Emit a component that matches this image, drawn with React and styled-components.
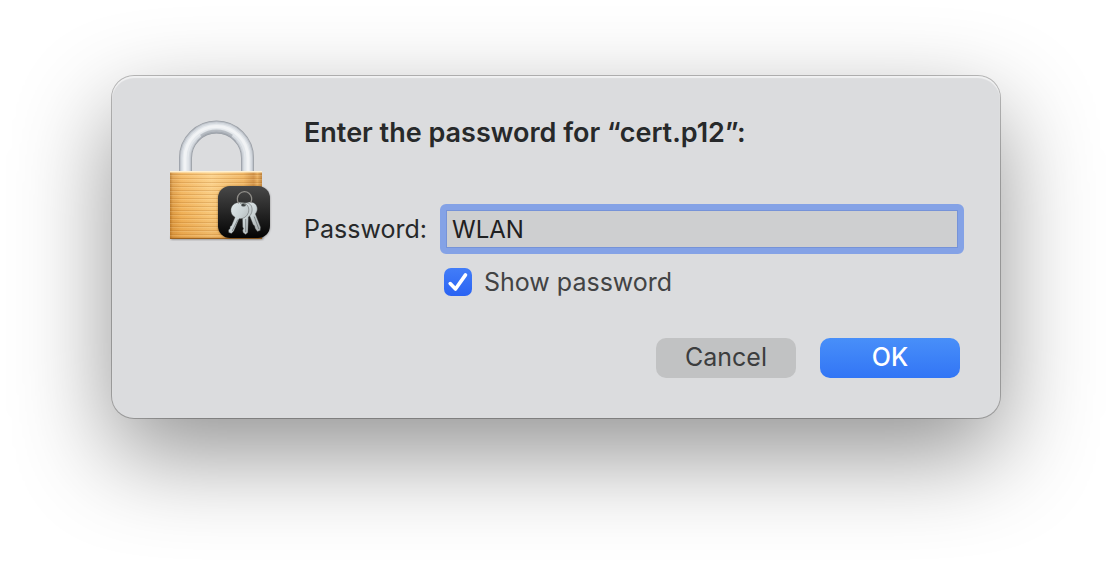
import React, { useState } from "react";
import styled, { createGlobalStyle } from "styled-components";

const App = () => {
  const [password, setPassword] = useState('WLAN')
  const [visible, setVisible] = useState(true)

  return (
    <Page>
      <GlobalStyle />
      <Dialog role="dialog" aria-labelledby="dialog-title">
        <LockIcon />
        <Form onSubmit={(ev) => ev.preventDefault()}>
          <Title id="dialog-title">Enter the password for “cert.p12”:</Title>
          <Fields>
            <Label htmlFor="password">Password:</Label>
            <Field
              id="password"
              type={visible ? 'text' : 'password'}
              value={password}
              onChange={(ev) => setPassword(ev.target.value)}
            />
            <CheckRow htmlFor="show-password">
              <CheckBox>
                <CheckInput
                  id="show-password"
                  type="checkbox"
                  checked={visible}
                  onChange={() => setVisible(!visible)}
                />
                {visible && (
                  <CheckMark viewBox="0 0 28 28" aria-hidden="true">
                    <path d="M6.2 15.6 L11.5 21 L21.5 6.9" />
                  </CheckMark>
                )}
              </CheckBox>
              Show password
            </CheckRow>
          </Fields>
          <Actions>
            <Button type="button">Cancel</Button>
            <Button type="submit" $primary>OK</Button>
          </Actions>
        </Form>
      </Dialog>
    </Page>
  );
};

const LockIcon = () => (
  <Icon viewBox="0 0 128 128" aria-hidden="true">
    <defs>
      <linearGradient id="brass" x1="0" x2="1" y1="0" y2="0">
        <stop offset="0" stopColor="#b97a2c" />
        <stop offset="0.03" stopColor="#e0a04a" />
        <stop offset="0.12" stopColor="#f3b55c" />
        <stop offset="0.45" stopColor="#fccf83" />
        <stop offset="0.8" stopColor="#f0b25a" />
        <stop offset="0.91" stopColor="#d08c3b" />
        <stop offset="0.95" stopColor="#e9aa54" />
        <stop offset="1" stopColor="#bd7d30" />
      </linearGradient>
      <linearGradient id="shade" x1="0" x2="0" y1="0" y2="1">
        <stop offset="0" stopColor="#fff" stopOpacity="0.1" />
        <stop offset="0.6" stopColor="#d98a2b" stopOpacity="0.12" />
        <stop offset="1" stopColor="#c97a20" stopOpacity="0.3" />
      </linearGradient>
      <pattern id="ridges" width="8" height="4" patternUnits="userSpaceOnUse">
        <rect y="2" width="8" height="1" fill="#a8641a" opacity="0.24" />
        <rect y="3" width="8" height="1" fill="#fff0cc" opacity="0.15" />
      </pattern>
      <linearGradient id="badge" x1="0" x2="0" y1="0" y2="1">
        <stop offset="0" stopColor="#484848" />
        <stop offset="0.5" stopColor="#262626" />
        <stop offset="1" stopColor="#030303" />
      </linearGradient>
      <linearGradient id="key" x1="0" x2="1" y1="0" y2="1">
        <stop offset="0" stopColor="#e4ecee" />
        <stop offset="0.5" stopColor="#c9d2d4" />
        <stop offset="1" stopColor="#a3a8a8" />
      </linearGradient>
      <filter id="soft" x="-20%" y="-20%" width="140%" height="140%">
        <feGaussianBlur stdDeviation="1.2" />
      </filter>
    </defs>

    {/* shackle, built up from dark edge to highlight */}
    <g fill="none">
      <path d="M33.5 56 V42 a31 31 0 0 1 62 0 V56" stroke="#9a9fa6" strokeWidth="13" />
      <path d="M33.5 56 V42 a31 31 0 0 1 62 0 V56" stroke="#bcc1c8" strokeWidth="11.4" />
      <path d="M33.5 56 V42 a31 31 0 0 1 62 0 V56" stroke="#d3d8de" strokeWidth="9.4" />
      <path d="M33.5 56 V42 a31 31 0 0 1 62 0 V56" stroke="#e3e7eb" strokeWidth="6.4" />
      <path d="M33 56 V42 a31.5 31.5 0 0 1 63 0 V56" stroke="#f1f3f5" strokeWidth="3" />
      <path d="M45 25.5 a25.8 25.8 0 0 1 39 0" stroke="#959ba3" strokeWidth="1.6" opacity="0.35" />
      <path d="M49 20 a27 27 0 0 1 31 0" stroke="#959ba3" strokeWidth="3" opacity="0.5" />
    </g>

    <rect x="19" y="120" width="92" height="3.5" fill="#000" opacity="0.4" filter="url(#soft)" />
    <rect x="18" y="55" width="92" height="68" rx="1" fill="url(#brass)" />
    <rect x="18" y="55" width="92" height="68" rx="1" fill="url(#shade)" />
    <rect x="18" y="58" width="92" height="63" fill="url(#ridges)" />
    <rect x="18" y="55" width="92" height="1.5" fill="#fff1d2" />
    <rect x="18" y="121.8" width="92" height="1.2" fill="#9d6220" />

    <rect x="66" y="70.5" width="52" height="52" rx="12" fill="#000" opacity="0.35" filter="url(#soft)" />
    <rect x="66" y="70" width="52" height="52" rx="12" fill="url(#badge)" />

    <g stroke="#3a3c3d" strokeWidth="0.4" strokeLinejoin="round">
      <path fill="url(#key)" d="M95 86.5 c3.5-1.4 8-.2 9.6 3.2 c1.3 2.9.8 5.8-1.2 8.2 l5.2 13.4 -.4 3.2 -2.8 1 -2.2-3.1 -.7-2.6 -1.3-1 -3.4-8.6 c-4-.6-6.6-3.2-6.8-7 c-.1-3.2 1.2-5.6 4-6.7z" />
      <path fill="url(#key)" d="M91 87 c3.4-1 7.6.3 8.7 3.8 c1.2 4-.3 8.2-3.3 10.2 l-.5 15.6 -2.3 1.9 -2.6-1.9 -.3-2.4 .8-1.6 -.8-1.6 -.4-11.6 c-3-2.2-4.4-10 .7-12.4z" />
      <path fill="url(#key)" d="M87.6 86.2 c4.9-.4 8.8 2.6 9.2 7 c.4 4.6-3.2 9-7.9 9.5 l-1.8.1 -5.3 12.2 -2.3 2.6 -2.8-1 -.2-2.5 1.6-1.6 -.1-1.8 1.6-1.3 3.4-8.1 c-3.1-1.8-4.4-4.5-4.1-7.8 c.4-4.1 3.9-7 8.7-7.3z" />
    </g>
    <g fill="none" stroke="#62696b" strokeWidth="0.7">
      <path d="M85.8 103.5 L80.2 115" />
      <path d="M93.7 103 V116" />
      <path d="M102.2 100.5 L106.8 113" />
    </g>
    <ellipse cx="91.5" cy="89" rx="2.3" ry="1.5" fill="#3d4243" />
    <path d="M86.6 87.5 a7.2 7.6 0 1 1 12.2-.6" fill="none" stroke="#8f8d88" strokeWidth="1.3" />
    <path d="M88 87.2 c2.2-.9 5-.2 5.4 2.4" fill="none" stroke="#737875" strokeWidth="1" />
  </Icon>
);

const GlobalStyle = createGlobalStyle`
  * {
    box-sizing: border-box;
  }

  body {
    margin: 0;
    background: #fff;
    font-family: Inter, "Liberation Sans", sans-serif;
  }
`;

const Page = styled.main`
  min-height: 100vh;
  padding: 76px 112px;
`;

const Dialog = styled.section`
  display: flex;
  align-items: flex-start;
  gap: 24px;
  padding: 40px 36px 40px 40px;
  border-radius: 22px;
  background: #dbdcde;
  box-shadow:
    inset 0 2px 1px rgba(255, 255, 255, 0.6),
    0 0 0 1px rgba(0, 0, 0, 0.25),
    0 36px 96px rgba(0, 0, 0, 0.43);
`;

const Icon = styled.svg`
  flex: none;
  width: 128px;
  height: 128px;
`;

const Form = styled.form`
  flex: 1;
  min-width: 0;
`;

const Title = styled.h1`
  margin: 0 0 54px;
  font-size: 27px;
  line-height: 34px;
  font-weight: 600;
  color: #27292a;
`;

const Fields = styled.div`
  display: grid;
  grid-template-columns: 124px 1fr;
  column-gap: 12px;
  row-gap: 14px;
  align-items: center;
`;

const Label = styled.label`
  font-size: 25px;
  line-height: 32px;
  white-space: nowrap;
  color: #27292a;
`;

const Field = styled.input`
  width: 100%;
  height: 50px;
  padding: 0 6px;
  border: 6px solid #84a2e6;
  border-radius: 6px;
  outline: none;
  background: #cecfd0;
  box-shadow: inset 0 0 0 1px #7693d8;
  font-family: inherit;
  font-size: 24px;
  color: #1f2021;
`;

const CheckRow = styled.label`
  grid-column: 2;
  display: flex;
  align-items: center;
  gap: 12px;
  height: 28px;
  padding-left: 4px;
  font-size: 25px;
  line-height: 32px;
  color: #424344;
`;

const CheckBox = styled.span`
  display: grid;

  > * {
    grid-area: 1 / 1;
  }
`;

const CheckInput = styled.input`
  appearance: none;
  width: 28px;
  height: 28px;
  margin: 0;
  border-radius: 7px;
  background: #c2c3c4;

  &:checked {
    background: linear-gradient(#427df8, #2a63f3);
  }
`;

const CheckMark = styled.svg`
  width: 28px;
  height: 28px;
  pointer-events: none;

  path {
    fill: none;
    stroke: #fff;
    stroke-width: 3.6;
    stroke-linecap: round;
    stroke-linejoin: round;
  }
`;

const Actions = styled.div`
  display: flex;
  justify-content: flex-end;
  gap: 24px;
  margin-top: 42px;
  padding-right: 4px;
`;

const Button = styled.button`
  width: 140px;
  height: 40px;
  padding: 0 0 2px;
  border: none;
  border-radius: 10px;
  background: ${(p) => p.$primary ? 'linear-gradient(#488ff9, #3275f5)' : '#c1c2c3'};
  font-family: inherit;
  font-size: 25px;
  font-weight: ${(p) => p.$primary ? 500 : 400};
  color: ${(p) => p.$primary ? '#fff' : '#3c3d3e'};
`;

export default App;
